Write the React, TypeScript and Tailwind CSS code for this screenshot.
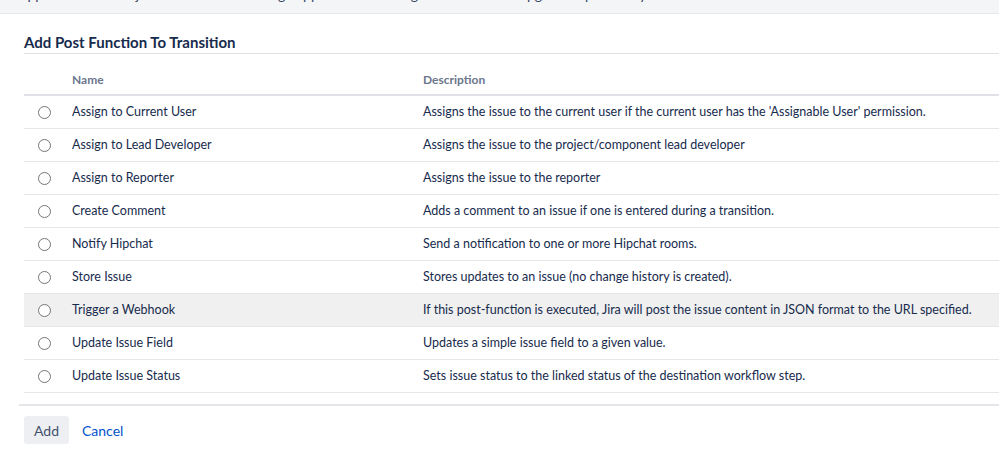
import { Fragment } from "react";

interface PostFunction {
  name: string;
  description: string;
  highlighted?: boolean;
}

const navItems = [
  "Applications",
  "Projects",
  "Issues",
  "Manage apps",
  "User management",
  "Latest upgrade report",
  "System",
];

const functions: PostFunction[] = [
  {
    name: "Assign to Current User",
    description:
      "Assigns the issue to the current user if the current user has the 'Assignable User' permission.",
  },
  {
    name: "Assign to Lead Developer",
    description: "Assigns the issue to the project/component lead developer",
  },
  { name: "Assign to Reporter", description: "Assigns the issue to the reporter" },
  {
    name: "Create Comment",
    description: "Adds a comment to an issue if one is entered during a transition.",
  },
  {
    name: "Notify Hipchat",
    description: "Send a notification to one or more Hipchat rooms.",
  },
  {
    name: "Store Issue",
    description: "Stores updates to an issue (no change history is created).",
  },
  {
    name: "Trigger a Webhook",
    description:
      "If this post-function is executed, Jira will post the issue content in JSON format to the URL specified.",
    highlighted: true,
  },
  {
    name: "Update Issue Field",
    description: "Updates a simple issue field to a given value.",
  },
  {
    name: "Update Issue Status",
    description: "Sets issue status to the linked status of the destination workflow step.",
  },
];

export default function App() {
  return (
    <div className="w-[999px] h-[471px] overflow-hidden bg-white text-[#172b4d] font-['Lato',sans-serif]">
      {/* top nav, scrolled mostly out of view */}
      <div className="h-[14px] overflow-hidden bg-[#f4f5f7] border-b border-[#e6e8ec]">
        <nav className="flex gap-[21px] pl-[18px] -mt-[13px] text-[14px] leading-[16px] text-[#344563]">
          {navItems.map((item) => (
            <span key={item}>{item}</span>
          ))}
        </nav>
      </div>

      <main className="pl-[24px]">
        <h2 className="mt-[18px] border-b border-[#dfe1e6] pb-[1px] text-[15px] leading-[20px] font-bold text-[#172b4d]">
          Add Post Function To Transition
        </h2>

        <div className="grid grid-cols-[48px_351px_1fr] text-[12.5px]">
          <div className="h-[42px] border-b-2 border-[#dfe1e6]" />
          <div className="h-[42px] pt-[17px] border-b-2 border-[#dfe1e6] text-[12px] font-bold text-[#6b778c]">
            Name
          </div>
          <div className="h-[42px] pt-[17px] border-b-2 border-[#dfe1e6] text-[12px] font-bold text-[#6b778c]">
            Description
          </div>

          {functions.map((fn) => {
            const rowBg = fn.highlighted ? "bg-[#f0f0f0]" : "bg-white";
            return (
              <Fragment key={fn.name}>
                <div
                  className={`h-[33px] flex items-center border-b border-[#e4e6ea] pl-[14px] ${rowBg}`}
                >
                  <span className="block w-[13px] h-[13px] rounded-full border border-[#757575] bg-white" />
                </div>
                <div
                  className={`h-[33px] flex items-center pt-[1px] border-b border-[#e4e6ea] whitespace-nowrap ${rowBg}`}
                >
                  {fn.name}
                </div>
                <div
                  className={`h-[33px] flex items-center pt-[1px] border-b border-[#e4e6ea] whitespace-nowrap ${rowBg}`}
                >
                  {fn.description}
                </div>
              </Fragment>
            );
          })}
        </div>

        <div className="mt-[11px] -ml-[5px] border-t-2 border-[#e4e6ea] pl-[5px] pt-[10px] flex items-center gap-[13px] text-[14px]">
          <button className="h-[28px] w-[45px] rounded-[3px] bg-[#eeeff2] text-[#42526e]">
            Add
          </button>
          <a href="#" className="text-[#0052cc]">
            Cancel
          </a>
        </div>
      </main>
    </div>
  );
}
